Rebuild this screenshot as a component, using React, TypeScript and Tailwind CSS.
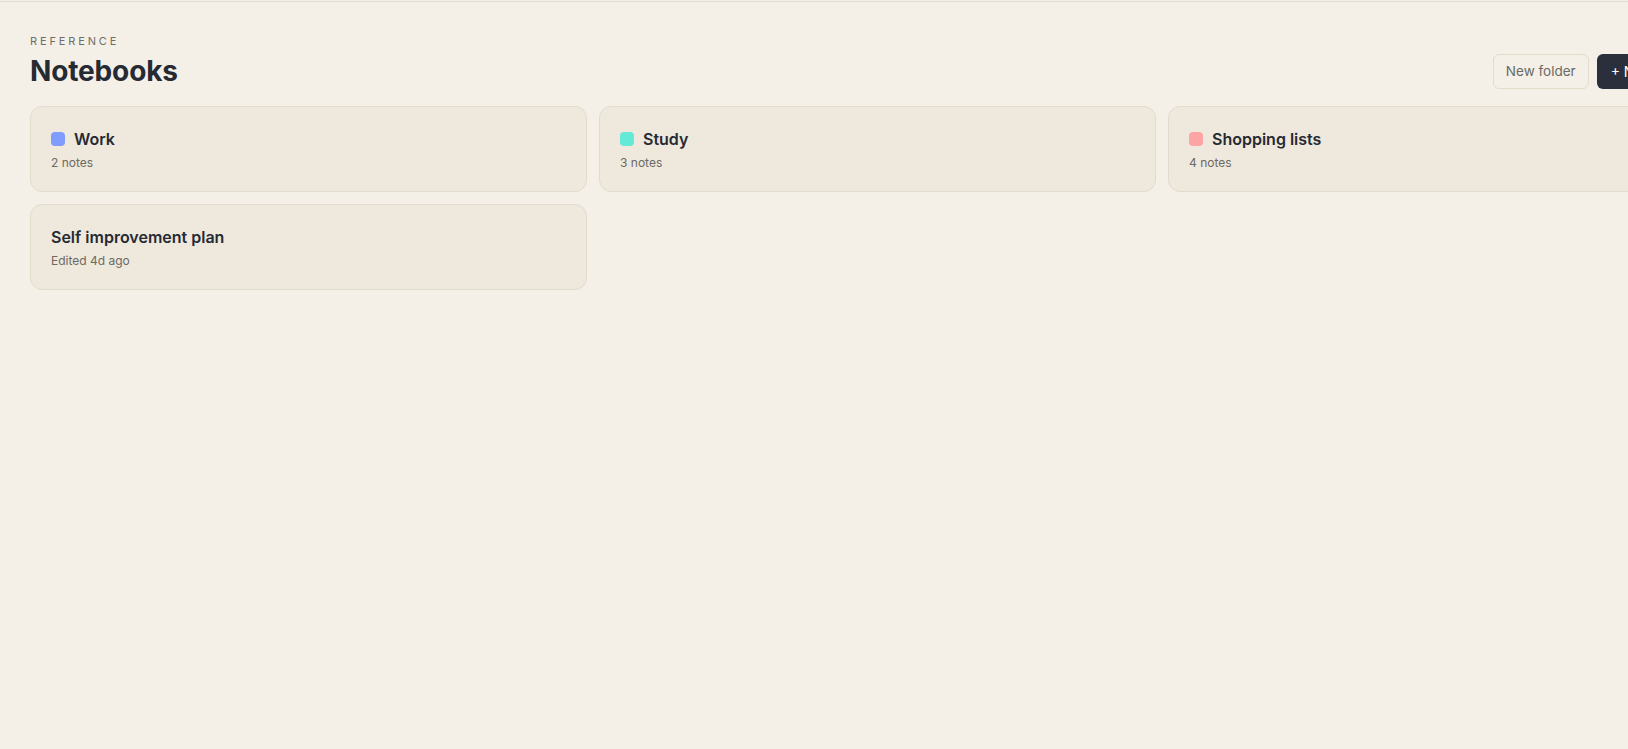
const notebooks = [
  { name: 'Work', count: '2 notes', color: 'bg-[#809cfc]' },
  { name: 'Study', count: '3 notes', color: 'bg-[#63e9d6]' },
  { name: 'Shopping lists', count: '4 notes', color: 'bg-[#fda5a5]' },
];

function Card({ title, meta, color }: { title: string; meta: string; color?: string }) {
  return (
    <div className="rounded-xl border border-[#e2dccb] bg-[#efe8dd] px-5 pt-[20px] pb-[20px]">
      <div className="flex items-center gap-[9px]">
        {color && <span className={`h-[14px] w-[14px] rounded-[4px] ${color}`} />}
        <span className="text-[16px] leading-6 font-semibold text-[#262a33]">{title}</span>
      </div>
      <div className="mt-[4px] text-[12px] leading-4 text-[#6b6a63]">{meta}</div>
    </div>
  );
}

export default function App() {
  return (
    <div
      className="h-[749px] w-screen overflow-hidden bg-[#f4f0e8]"
      style={{ fontFamily: 'Inter, "Noto Sans", sans-serif' }}
    >
      <div className="mt-px border-t border-[#dfdbd1]" />
      <div className="w-[1731px] px-[30px] pt-[31px]">
        <div className="mb-[17px] flex items-end justify-between">
          <div>
            <div className="text-[11px] leading-4 tracking-[0.26em] text-[#6f6e66]">REFERENCE</div>
            <h1 className="mt-1 text-[28px] leading-[36px] font-bold tracking-[-0.005em] text-[#262a33]">
              Notebooks
            </h1>
          </div>
          <div className="flex items-center gap-2">
            <button className="h-[35px] rounded-md border border-[#e2dccb] bg-[#f4f0e8] px-3 text-[13.5px] text-[#6b6a63]">
              New folder
            </button>
            <button className="h-[35px] rounded-md bg-[#2a2f3b] px-[14px] text-[14px] text-white">
              + New note
            </button>
          </div>
        </div>
        <div className="grid grid-cols-[557px_557px_557px] gap-3">
          {notebooks.map((n) => (
            <Card key={n.name} title={n.name} meta={n.count} color={n.color} />
          ))}
          <Card title="Self improvement plan" meta="Edited 4d ago" />
        </div>
      </div>
    </div>
  );
}
